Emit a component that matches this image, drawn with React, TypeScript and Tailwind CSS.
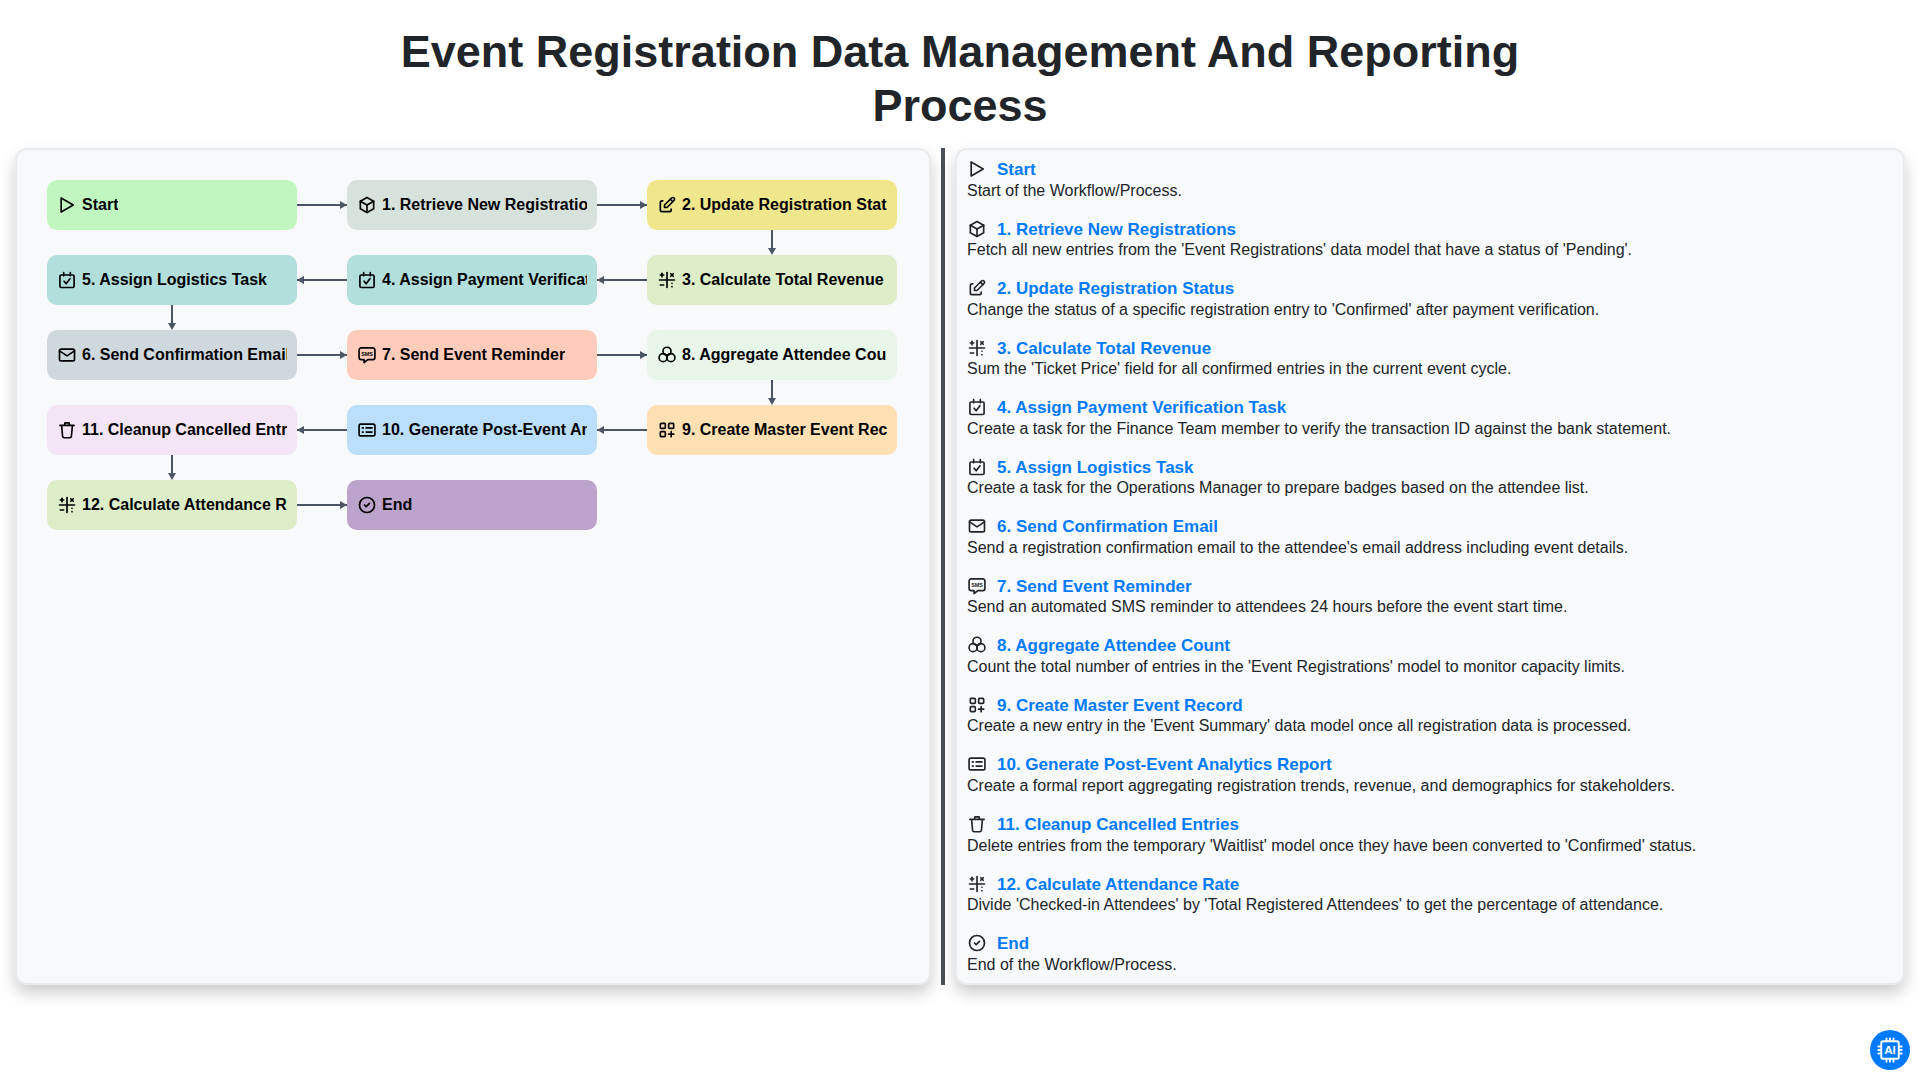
import type { ReactNode } from "react";
import { TbBox, TbCircleCheck, TbEdit, TbMail, TbMathSymbols } from "react-icons/tb";

function Svg({ children }: { children: ReactNode }) {
  return (
    <svg viewBox="0 0 24 24" fill="none" stroke="currentColor" strokeWidth={2} strokeLinecap="round" strokeLinejoin="round" className="h-5 w-5 shrink-0">
      {children}
    </svg>
  );
}

function PlayIcon() {
  return (
    <Svg>
      <path d="M5 3.5v17L19.5 12z" />
    </Svg>
  );
}

function TaskIcon() {
  return (
    <Svg>
      <rect x="3.5" y="6" width="17" height="15" rx="1.5" />
      <path d="M8 3v4M16 3v4M8.5 13.5l2.5 3 4.5-6" />
    </Svg>
  );
}

function SmsIcon() {
  return (
    <Svg>
      <path d="M5 3.5h14a2.5 2.5 0 0 1 2.5 2.5v9a2.5 2.5 0 0 1-2.5 2.5h-6l-4.5 3.5v-3.5H5A2.5 2.5 0 0 1 2.5 15V6A2.5 2.5 0 0 1 5 3.5z" />
      <text x="12" y="13" textAnchor="middle" fontSize="6.5" fontWeight="700" fill="currentColor" stroke="none" fontFamily="Liberation Sans, sans-serif">SMS</text>
    </Svg>
  );
}

function ClusterIcon() {
  return (
    <Svg>
      <circle cx="12" cy="7.5" r="4.8" />
      <circle cx="7.3" cy="15.2" r="4.8" />
      <circle cx="16.7" cy="15.2" r="4.8" />
      <path d="M12 12.3v3M9.5 11l2.5 1.3 2.5-1.3" strokeWidth="1.6" />
    </Svg>
  );
}

function AppsIcon() {
  return (
    <Svg>
      <rect x="4" y="4" width="6" height="6" rx="1" />
      <rect x="14" y="4" width="6" height="6" rx="1" />
      <rect x="4" y="14" width="6" height="6" rx="1" />
      <path d="M14 17h6M17 14v6" />
    </Svg>
  );
}

function ReportIcon() {
  return (
    <Svg>
      <rect x="2.5" y="5" width="19" height="14" rx="2" />
      <path d="M6.5 9.5h1M6.5 14.5h1M11 9.5h7M11 14.5h7" />
    </Svg>
  );
}

function BucketIcon() {
  return (
    <Svg>
      <path d="M3.5 6.5h17M5.5 6.5l1.2 13a2 2 0 0 0 2 1.8h6.6a2 2 0 0 0 2-1.8l1.2-13M9 6.5l.5-3h5l.5 3" />
    </Svg>
  );
}

const tb = "h-5 w-5 shrink-0";

const icons: Record<string, ReactNode> = {
  start: <PlayIcon />,
  box: <TbBox className={tb} />,
  edit: <TbEdit className={tb} />,
  math: <TbMathSymbols className={tb} />,
  task: <TaskIcon />,
  mail: <TbMail className={tb} />,
  sms: <SmsIcon />,
  cluster: <ClusterIcon />,
  apps: <AppsIcon />,
  report: <ReportIcon />,
  bucket: <BucketIcon />,
  end: <TbCircleCheck className={tb} />,
};

const steps = [
  { id: "start", icon: "start", bg: "bg-[#c1f6c1]", title: "Start", text: "Start of the Workflow/Process." },
  { id: "1", icon: "box", bg: "bg-[#d8e2dc]", title: "1. Retrieve New Registrations", text: "Fetch all new entries from the 'Event Registrations' data model that have a status of 'Pending'." },
  { id: "2", icon: "edit", bg: "bg-[#f0e68c]", title: "2. Update Registration Status", text: "Change the status of a specific registration entry to 'Confirmed' after payment verification." },
  { id: "3", icon: "math", bg: "bg-[#dcedc8]", title: "3. Calculate Total Revenue", text: "Sum the 'Ticket Price' field for all confirmed entries in the current event cycle." },
  { id: "4", icon: "task", bg: "bg-[#b2dfdb]", title: "4. Assign Payment Verification Task", text: "Create a task for the Finance Team member to verify the transaction ID against the bank statement." },
  { id: "5", icon: "task", bg: "bg-[#b2dfdb]", title: "5. Assign Logistics Task", text: "Create a task for the Operations Manager to prepare badges based on the attendee list." },
  { id: "6", icon: "mail", bg: "bg-[#cfd8dc]", title: "6. Send Confirmation Email", text: "Send a registration confirmation email to the attendee's email address including event details." },
  { id: "7", icon: "sms", bg: "bg-[#ffccbc]", title: "7. Send Event Reminder", text: "Send an automated SMS reminder to attendees 24 hours before the event start time." },
  { id: "8", icon: "cluster", bg: "bg-[#e8f5e9]", title: "8. Aggregate Attendee Count", text: "Count the total number of entries in the 'Event Registrations' model to monitor capacity limits." },
  { id: "9", icon: "apps", bg: "bg-[#ffe0b2]", title: "9. Create Master Event Record", text: "Create a new entry in the 'Event Summary' data model once all registration data is processed." },
  { id: "10", icon: "report", bg: "bg-[#bbdefb]", title: "10. Generate Post-Event Analytics Report", text: "Create a formal report aggregating registration trends, revenue, and demographics for stakeholders." },
  { id: "11", icon: "bucket", bg: "bg-[#f3e5f5]", title: "11. Cleanup Cancelled Entries", text: "Delete entries from the temporary 'Waitlist' model once they have been converted to 'Confirmed' status." },
  { id: "12", icon: "math", bg: "bg-[#dcedc8]", title: "12. Calculate Attendance Rate", text: "Divide 'Checked-in Attendees' by 'Total Registered Attendees' to get the percentage of attendance." },
  { id: "end", icon: "end", bg: "bg-[#bba3cb]", title: "End", text: "End of the Workflow/Process." },
];

const byId = Object.fromEntries(steps.map((s) => [s.id, s]));

function Node({ id }: { id: string }) {
  const step = byId[id];
  return (
    <div className={`flex h-[50px] items-center overflow-hidden whitespace-nowrap rounded-[10px] px-2.5 text-base font-bold text-black ${step.bg}`}>
      <span className="mr-[5px] flex">{icons[step.icon]}</span>
      <span className="overflow-hidden">{step.title}</span>
    </div>
  );
}

function Arrow({ dir }: { dir: "left" | "right" | "down" }) {
  if (dir === "down") {
    return (
      <svg width="250" height="25" viewBox="0 0 250 25" className="block text-[#4b5563]">
        <path d="M125 0v20" stroke="currentColor" strokeWidth="2" />
        <path d="M121 18h8l-4 7z" fill="currentColor" />
      </svg>
    );
  }
  return (
    <svg width="50" height="50" viewBox="0 0 50 50" className="block text-[#4b5563]">
      <path d="M0 25h50" stroke="currentColor" strokeWidth="2" />
      {dir === "right" ? <path d="M43 21l7 4-7 4z" fill="currentColor" /> : <path d="M7 21l-7 4 7 4z" fill="currentColor" />}
    </svg>
  );
}

function Blank() {
  return <div />;
}

const panel = "rounded-xl border-2 border-[#e9ecef] bg-[#f8f9fa] shadow-[0_8px_16px_rgba(0,0,0,0.2)]";

export default function App() {
  return (
    <div className="min-h-screen bg-white px-[15px] pt-[25px] font-['Liberation_Sans',Arial,sans-serif] text-[#212529]">
      <h1 className="mx-auto mb-[15px] max-w-[1200px] text-center text-[45px] font-bold leading-[54px]">
        Event Registration Data Management And Reporting Process
      </h1>
      <div className="flex h-[837px] gap-2.5">
        <div className={`w-[916px] shrink-0 p-[30px] ${panel}`}>
          <div className="grid grid-cols-[250px_50px_250px_50px_250px] grid-rows-[50px_25px_50px_25px_50px_25px_50px_25px_50px]">
            <Node id="start" /><Arrow dir="right" /><Node id="1" /><Arrow dir="right" /><Node id="2" />
            <Blank /><Blank /><Blank /><Blank /><Arrow dir="down" />
            <Node id="5" /><Arrow dir="left" /><Node id="4" /><Arrow dir="left" /><Node id="3" />
            <Arrow dir="down" /><Blank /><Blank /><Blank /><Blank />
            <Node id="6" /><Arrow dir="right" /><Node id="7" /><Arrow dir="right" /><Node id="8" />
            <Blank /><Blank /><Blank /><Blank /><Arrow dir="down" />
            <Node id="11" /><Arrow dir="left" /><Node id="10" /><Arrow dir="left" /><Node id="9" />
            <Arrow dir="down" /><Blank /><Blank /><Blank /><Blank />
            <Node id="12" /><Arrow dir="right" /><Node id="end" />
          </div>
        </div>
        <div className="w-1 shrink-0 bg-[#495057]" />
        <div className={`flex-1 overflow-hidden px-2.5 pt-[9px] ${panel}`}>
          {steps.map((step) => (
            <div key={step.id} className="mb-[18.55px]">
              <div className="flex h-[22.5px] items-start text-[17px] font-bold text-[#007bff]">
                <span className="mr-2.5 flex text-[#212529]">{icons[step.icon]}</span>
                <span className="leading-[22px]">{step.title}</span>
              </div>
              <p className="text-base leading-[18.5px] text-[#212529]">{step.text}</p>
            </div>
          ))}
        </div>
      </div>
      <div className="fixed bottom-2.5 right-2.5 flex h-10 w-10 items-center justify-center rounded-full bg-[#007bff] text-white">
        <svg viewBox="0 0 24 24" className="h-7 w-7" fill="none" stroke="currentColor" strokeWidth="1.6" strokeLinecap="round">
          <rect x="4.5" y="4.5" width="15" height="15" rx="1.5" />
          <path d="M9 2V4.5M12 2V4.5M15 2V4.5M9 19.5V22M12 19.5V22M15 19.5V22M2 9H4.5M2 12H4.5M2 15H4.5M19.5 9H22M19.5 12H22M19.5 15H22" />
          <text x="12" y="15.6" textAnchor="middle" fontSize="10" fontWeight="700" fill="currentColor" stroke="none" fontFamily="Liberation Sans, sans-serif">AI</text>
        </svg>
      </div>
    </div>
  );
}
